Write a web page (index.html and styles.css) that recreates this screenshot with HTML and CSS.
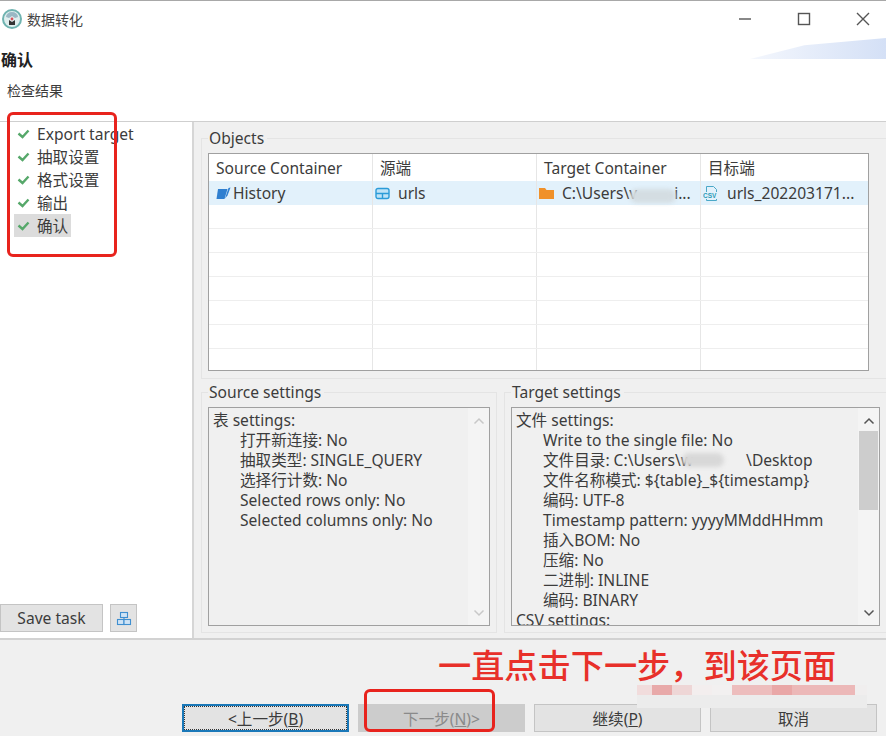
FILE: index.html
```html
<!DOCTYPE html>
<html lang="zh-CN">
<head>
  <meta charset="UTF-8" />
  <title>数据转化</title>
  <link rel="stylesheet" href="styles.css">
</head>
<body>
  <div class="window">

    <!-- Title and page header -->
    <header class="top">
      <div class="titlebar">
        <svg class="app-icon" width="20" height="20" viewBox="0 0 20 20">
          <circle cx="10" cy="10" r="9" fill="#dfeeee" stroke="#6fb3b0" stroke-width="2"/>
          <path d="M4 8a6 5 0 0 1 12 0l-3 1-3-2-3 2z" fill="#9ab8c4"/>
          <path d="M7 16v-5l3 2 3-2v5z" fill="#333"/>
          <circle cx="10" cy="10" r="1.4" fill="#d9505a"/>
        </svg>
        <span class="app-title">数据转化</span>
        <div class="win-controls">
          <svg width="14" height="14" viewBox="0 0 14 14"><path d="M1 7h12" stroke="#555" stroke-width="1.4"/></svg>
          <svg width="14" height="14" viewBox="0 0 14 14"><rect x="1.5" y="1.5" width="11" height="11" fill="none" stroke="#555" stroke-width="1.4"/></svg>
          <svg width="14" height="14" viewBox="0 0 14 14"><path d="M1 1l12 12M13 1L1 13" stroke="#555" stroke-width="1.4"/></svg>
        </div>
      </div>
      <h1>确认</h1>
      <p class="subtitle">检查结果</p>
      <div class="banner"></div>
    </header>

    <div class="body">
      <!-- Step list -->
      <aside class="sidebar">
        <ul class="steps">
          <li><svg class="check" width="13" height="10" viewBox="0 0 13 10"><path d="M1.5 4.5l4 3.5 6-6.5" fill="none" stroke="#56a86a" stroke-width="2.4"/></svg><span>Export target</span></li>
          <li><svg class="check" width="13" height="10" viewBox="0 0 13 10"><path d="M1.5 4.5l4 3.5 6-6.5" fill="none" stroke="#56a86a" stroke-width="2.4"/></svg><span>抽取设置</span></li>
          <li><svg class="check" width="13" height="10" viewBox="0 0 13 10"><path d="M1.5 4.5l4 3.5 6-6.5" fill="none" stroke="#56a86a" stroke-width="2.4"/></svg><span>格式设置</span></li>
          <li><svg class="check" width="13" height="10" viewBox="0 0 13 10"><path d="M1.5 4.5l4 3.5 6-6.5" fill="none" stroke="#56a86a" stroke-width="2.4"/></svg><span>输出</span></li>
          <li class="current"><svg class="check" width="13" height="10" viewBox="0 0 13 10"><path d="M1.5 4.5l4 3.5 6-6.5" fill="none" stroke="#56a86a" stroke-width="2.4"/></svg><span>确认</span></li>
        </ul>
        <div class="task-row">
          <button class="btn save-btn">Save task</button>
          <button class="btn icon-btn">
            <svg width="16" height="15" viewBox="0 0 16 15" fill="#cfe3f5" stroke="#3f8fd0" stroke-width="1.1">
              <rect x="4.5" y="1.5" width="7" height="5"/>
              <rect x="1.5" y="8.5" width="6.5" height="5"/>
              <rect x="8" y="8.5" width="6.5" height="5"/>
              <path d="M8 6.5v2" fill="none"/>
            </svg>
          </button>
        </div>
      </aside>

      <main class="content">
        <fieldset class="group objects">
          <legend>Objects</legend>
          <div class="table">
            <div class="row head">
              <div class="cell">Source Container</div>
              <div class="cell">源端</div>
              <div class="cell">Target Container</div>
              <div class="cell">目标端</div>
            </div>
            <div class="row selected">
              <div class="cell tight">
                <svg width="15" height="15" viewBox="0 0 15 15"><path d="M2 3h9.5L8.5 13H.5z" fill="#2f7fd0"/><path d="M14.5 1.5l-3 8-2.5 3 .8-2.5 2.7-8z" fill="#2f7fd0"/></svg>
                <span>History</span>
              </div>
              <div class="cell iconed">
                <svg width="15" height="13" viewBox="0 0 15 13"><rect x="1" y="1.5" width="13" height="10" rx="2" fill="#bfe3f7" stroke="#2b9bd8" stroke-width="1.4"/><path d="M1 6.5h13M7.5 6.5v5" stroke="#2b9bd8" stroke-width="1.4"/></svg>
                <span>urls</span>
              </div>
              <div class="cell iconed path-cell">
                <svg width="15" height="13" viewBox="0 0 15 13"><path d="M0 1h6l1.5 2H15v9H0z" fill="#f0912a"/></svg>
                <span>C:\Users\v<span class="spacer"></span>i...</span>
                <span class="smudge table-smudge"></span>
              </div>
              <div class="cell iconed">
                <svg width="16" height="17" viewBox="0 0 16 17"><path d="M3.5 7V1.5h7l3 3V7M3.5 14v1.5h10V14" fill="none" stroke="#4aa8c8"/><text x="0" y="13" font-size="6.5" font-family="Liberation Sans" font-weight="bold" fill="#2b9bb8">CSV</text></svg>
                <span>urls_202203171...</span>
              </div>
            </div>
            <div class="row"><div class="cell"></div><div class="cell"></div><div class="cell"></div><div class="cell"></div></div>
            <div class="row"><div class="cell"></div><div class="cell"></div><div class="cell"></div><div class="cell"></div></div>
            <div class="row"><div class="cell"></div><div class="cell"></div><div class="cell"></div><div class="cell"></div></div>
            <div class="row"><div class="cell"></div><div class="cell"></div><div class="cell"></div><div class="cell"></div></div>
            <div class="row"><div class="cell"></div><div class="cell"></div><div class="cell"></div><div class="cell"></div></div>
            <div class="row"><div class="cell"></div><div class="cell"></div><div class="cell"></div><div class="cell"></div></div>
            <div class="row"><div class="cell"></div><div class="cell"></div><div class="cell"></div><div class="cell"></div></div>
          </div>
        </fieldset>

        <div class="settings">
          <fieldset class="group source">
            <legend>Source settings</legend>
            <div class="textbox">
              <div class="lines">
                <div>表 settings:</div>
                <div class="in">打开新连接: No</div>
                <div class="in">抽取类型: SINGLE_QUERY</div>
                <div class="in">选择行计数: No</div>
                <div class="in">Selected rows only: No</div>
                <div class="in">Selected columns only: No</div>
              </div>
              <div class="scrollbar faded">
                <svg width="12" height="8" viewBox="0 0 12 8"><path d="M1.5 6.5L6 2l4.5 4.5" fill="none" stroke="#c8c8c8" stroke-width="1.5"/></svg>
                <svg width="12" height="8" viewBox="0 0 12 8"><path d="M1.5 1.5L6 6l4.5-4.5" fill="none" stroke="#c8c8c8" stroke-width="1.5"/></svg>
              </div>
            </div>
          </fieldset>

          <fieldset class="group target">
            <legend>Target settings</legend>
            <div class="textbox">
              <div class="lines">
                <div>文件 settings:</div>
                <div class="in">Write to the single file: No</div>
                <div class="in path-line">文件目录: C:\Users\w<span class="name-gap"></span>\Desktop<span class="smudge box-smudge"></span></div>
                <div class="in">文件名称模式: ${table}_${timestamp}</div>
                <div class="in">编码: UTF-8</div>
                <div class="in">Timestamp pattern: yyyyMMddHHmm</div>
                <div class="in">插入BOM: No</div>
                <div class="in">压缩: No</div>
                <div class="in">二进制: INLINE</div>
                <div class="in">编码: BINARY</div>
                <div>CSV settings:</div>
              </div>
              <div class="scrollbar">
                <svg width="12" height="8" viewBox="0 0 12 8"><path d="M1.5 6.5L6 2l4.5 4.5" fill="none" stroke="#555" stroke-width="1.5"/></svg>
                <div class="thumb"></div>
                <svg width="12" height="8" viewBox="0 0 12 8"><path d="M1.5 1.5L6 6l4.5-4.5" fill="none" stroke="#555" stroke-width="1.5"/></svg>
              </div>
            </div>
          </fieldset>
        </div>
      </main>
    </div>

    <!-- Wizard buttons -->
    <footer class="footer">
      <button class="btn wizard focused">&lt;上一步(<u>B</u>)</button>
      <button class="btn wizard disabled">下一步(<u>N</u>)&gt;</button>
      <button class="btn wizard">继续(<u>P</u>)</button>
      <button class="btn wizard">取消</button>
    </footer>

    <!-- Annotations on top of the screenshot -->
    <div class="mark mark-steps"></div>
    <div class="mark mark-next"></div>
    <div class="note">一直点击下一步，到该页面</div>
    <div class="mosaic"></div>
  </div>
</body>
</html>
```

FILE: styles.css
```css
/* Basic reset */
html, body {
  margin: 0;
  padding: 0;
}
body {
  font-family: "Noto Sans", "Noto Sans CJK SC", sans-serif;
  font-size: 15.6px;
  color: #3c3c3c;
  background-color: #f0f0f0;
}
.window {
  position: relative;
  width: 886px;
  height: 736px;
  overflow: hidden;
  display: flex;
  flex-direction: column;
}

/* Header */
.top {
  position: relative;
  height: 120px;
  flex: none;
  background-color: #fff;
  border-top: 1px solid #a8a8a8;
  border-bottom: 1px solid #cfcfcf;
}
.titlebar {
  display: flex;
  align-items: center;
  height: 36px;
  padding-left: 2px;
}
.app-icon {
  margin-right: 5px;
}
.app-title {
  font-size: 14px;
  color: #444;
}
.win-controls {
  margin-left: auto;
  display: flex;
  gap: 45px;
  padding-right: 16px;
}
h1 {
  margin: 11px 0 0 1px;
  font-size: 16px;
  line-height: 24px;
  font-weight: bold;
  color: #222;
}
.subtitle {
  margin: 8px 0 0 7px;
  font-size: 14px;
  line-height: 22px;
}
.banner {
  position: absolute;
  right: 0;
  top: 37px;
  width: 136px;
  height: 21px;
  background: linear-gradient(90deg, #f4f7fd, #d4e0f6);
  clip-path: polygon(0 100%, 40% 35%, 100% 0, 100% 100%);
}

/* Sidebar */
.body {
  flex: 1;
  display: flex;
  min-height: 0;
}
.sidebar {
  width: 192px;
  flex: none;
  background-color: #fff;
  display: flex;
  flex-direction: column;
  justify-content: space-between;
}
.steps {
  list-style: none;
  margin: 0;
  padding: 0 0 0 14px;
}
.steps li {
  display: flex;
  align-items: center;
  width: max-content;
  height: 23px;
  padding-left: 3px;
  padding-right: 3px;
}
.steps .check {
  margin-right: 7px;
}
.steps li.current {
  background-color: #dcdcdc;
}
.task-row {
  display: flex;
  gap: 7px;
  padding-bottom: 6px;
}

/* Buttons */
.btn {
  font-family: inherit;
  font-size: 15.6px;
  color: #3c3c3c;
  background-color: #e3e3e3;
  border: 1px solid #c4c4c4;
  padding: 0;
}
.save-btn {
  width: 103px;
  height: 28px;
}
.icon-btn {
  width: 27px;
  height: 28px;
  display: flex;
  align-items: center;
  justify-content: center;
}

/* Content panels */
.content {
  flex: 1;
  border-left: 2px solid #d6d6d6;
  padding: 7px 0 5px 7px;
  display: flex;
  flex-direction: column;
  gap: 4px;
  min-width: 0;
}
.group {
  margin: 0;
  padding: 6px 6px 6px 6px;
  border: 1px solid #e4e4e4;
  min-width: 0;
}
.group legend {
  padding: 0 3px 0 1px;
  margin-left: 0;
  font-size: 15.6px;
  line-height: 18px;
}
.objects {
  height: 250px;
  box-sizing: border-box;
  flex: none;
  padding-right: 17px;
  border-right: none;
}
.table {
  border: 1px solid #a0a0a0;
  background-color: #fff;
  height: 218px;
  box-sizing: border-box;
  overflow: hidden;
}
.row {
  display: grid;
  grid-template-columns: 164px 164px 164px 1fr;
  height: 24px;
  box-sizing: border-box;
  border-bottom: 1px solid #eeeeee;
}
.row.head {
  height: 27px;
  border-bottom: none;
}
.row.selected {
  background-color: #e2f1fb;
  border-bottom: none;
}
.cell {
  display: flex;
  align-items: center;
  padding-left: 7px;
  border-right: 1px solid #e6e6e6;
  white-space: nowrap;
  line-height: 24px;
}
.cell:last-child {
  border-right: none;
}
.cell.tight {
  gap: 2px;
}
.cell.iconed {
  padding-left: 2px;
  gap: 8px;
}
.path-cell {
  position: relative;
}
.spacer {
  display: inline-block;
  width: 37px;
}

/* Blurred out names */
.smudge {
  position: absolute;
  height: 14px;
  background-color: #d8d8d8;
  border-radius: 7px;
  filter: blur(2px);
}
.table-smudge {
  left: 93px;
  top: 8px;
  width: 46px;
  background-color: #d4dde2;
}
.box-smudge {
  left: 166px;
  top: 3px;
  width: 42px;
}

/* Settings boxes */
.settings {
  display: grid;
  grid-template-columns: 296px 1fr;
  gap: 7px;
  flex: 1;
  min-height: 0;
}
.target {
  border-right: none;
}
.textbox {
  height: 219px;
  box-sizing: border-box;
  border: 1px solid #a0a0a0;
  display: flex;
  overflow: hidden;
}
.lines {
  flex: 1;
  padding: 2px 0 0 4px;
  line-height: 20px;
  white-space: nowrap;
  min-width: 0;
}
.lines .in {
  padding-left: 27px;
}
.path-line {
  position: relative;
}
.name-gap {
  display: inline-block;
  width: 53px;
}
.scrollbar {
  width: 21px;
  flex: none;
  background-color: #f4f4f4;
  display: flex;
  flex-direction: column;
  align-items: center;
  justify-content: space-between;
  padding: 9px 0 8px;
  box-sizing: border-box;
  position: relative;
}
.thumb {
  position: absolute;
  top: 23px;
  left: 1px;
  right: 1px;
  height: 79px;
  background-color: #cdcdcd;
}

/* Wizard footer */
.footer {
  height: 98px;
  flex: none;
  box-sizing: border-box;
  border-top: 2px solid #d2d2d2;
  display: flex;
  align-items: flex-end;
  gap: 9px;
  padding: 0 9px 4px 182px;
}
.wizard {
  width: 167px;
  height: 28px;
}
.wizard.focused {
  border: 2px solid #1a78b8;
  outline: 1px dotted #333;
  outline-offset: -3px;
}
.wizard.disabled {
  background-color: #cccccc;
  border-color: #cccccc;
  color: #8a8a8a;
}

/* Red annotations */
.mark {
  position: absolute;
  border: 3px solid #e8231d;
  border-radius: 6px;
}
.mark-steps {
  left: 7px;
  top: 112px;
  width: 104px;
  height: 139px;
}
.mark-next {
  left: 364px;
  top: 689px;
  width: 125px;
  height: 37px;
}
.note {
  position: absolute;
  left: 438px;
  top: 644px;
  font-size: 33.2px;
  font-weight: 500;
  line-height: 44px;
  color: #e8302a;
  white-space: nowrap;
}
.mosaic {
  position: absolute;
  left: 637px;
  top: 685px;
  width: 230px;
  height: 23px;
  background:
    linear-gradient(90deg,
      #f1dcdc 0 15px, #e8a9a9 15px 35px, #eed6d6 35px 55px, #f3eeee 55px 75px,
      #f2f0f0 75px 95px, #edbdbd 95px 135px, #e9a7a7 135px 155px, #ecb8b8 155px 218px,
      #f0eeee 218px 230px) top / 100% 10px no-repeat,
    #ececec;
}
```
